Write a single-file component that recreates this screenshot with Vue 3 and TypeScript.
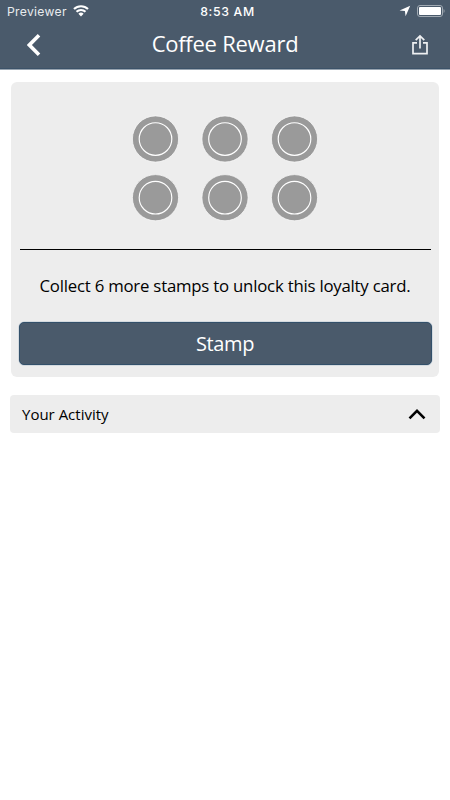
<script setup lang="ts">
import { computed, ref } from 'vue'

const total = 6
const columns = 3
const collected = ref(0)
const remaining = computed(() => total - collected.value)

const stamps = Array.from({ length: total }, (_, i) => ({
  id: i,
  cx: 23.5 + (i % columns) * 69.5,
  cy: 24 + Math.floor(i / columns) * 58.7,
}))
</script>

<template>
  <div class="screen">
    <header class="header">
      <div class="status">
        <div class="carrier">
          <span class="carrier-name">Previewer</span>
          <svg class="wifi" width="16" height="12" viewBox="0 0 16 12" fill="none" stroke="#fff" stroke-width="2.1">
            <path d="M1 4.1a10 10 0 0 1 14 0M3.5 6.8a6.4 6.4 0 0 1 9 0" />
            <path d="M8 11.4L5.4 8.8a3.7 3.7 0 0 1 5.2 0z" fill="#fff" stroke="none" />
          </svg>
        </div>
        <span class="clock">8:53 AM</span>
        <div class="indicators">
          <svg width="12" height="12" viewBox="0 0 12 12"><path d="M11.2.8L6.6 11.2 5.9 6.1.6 5.5z" fill="#fff" /></svg>
          <svg width="28" height="12" viewBox="0 0 28 12">
            <rect x=".5" y=".5" width="25" height="11" rx="2.5" fill="none" stroke="#a1aab3" />
            <rect x="2" y="2" width="22" height="8" rx="1" fill="#fff" />
            <path d="M26.6 4c1.3.5 1.3 3.5 0 4z" fill="#a1aab3" />
          </svg>
        </div>
      </div>
      <nav class="nav">
        <svg class="back" width="14" height="22" viewBox="0 0 14 22"><path d="M12 1.3L2.4 11l9.6 9.7" fill="none" stroke="#fff" stroke-width="3.6" /></svg>
        <h1>Coffee Reward</h1>
        <svg class="share" width="18" height="22" viewBox="0 0 18 22" fill="none" stroke="#eef0f2" stroke-width="1.7">
          <path d="M6 8.8H2v10.8h14V8.8h-4M9 14.5V2M4.7 6.2L9 1.9l4.3 4.3" />
        </svg>
      </nav>
    </header>

    <section class="card">
      <svg class="stamps" width="187" height="107" viewBox="0 0 187 107">
        <g v-for="s in stamps" :key="s.id">
          <circle :cx="s.cx" :cy="s.cy" r="23.1" fill="#9a9a9a" stroke="#f7f7f7" stroke-width=".8" />
          <circle :cx="s.cx" :cy="s.cy" r="16.3" fill="none" stroke="#fff" stroke-width="1.15" />
        </g>
      </svg>
      <div class="divider"></div>
      <p class="message"><span>Collect {{ remaining }} more stamps to unlock this loyalty card.</span></p>
      <button class="stamp-button" type="button">Stamp</button>
    </section>

    <section class="activity">
      <span>Your Activity</span>
      <svg width="18" height="12" viewBox="0 0 18 12"><path d="M1.5 10.3L9 2.8l7.5 7.5" fill="none" stroke="#000" stroke-width="2.6" /></svg>
    </section>
  </div>
</template>

<style>
body {
  margin: 0;
  background: #fff;
}
</style>

<style scoped>
.screen {
  width: 450px;
  height: 800px;
  background: #fff;
  font-family: "Open Sans", "Noto Sans", sans-serif;
  color: #000;
  overflow: hidden;
}
.header {
  box-sizing: border-box;
  height: 70px;
  background: #4a5a6b;
  border-bottom: 1px solid #98a4b0;
  box-shadow: inset 0 -1px #3c5268;
  color: #fff;
}
.status {
  display: grid;
  grid-template-columns: 1fr auto 1fr;
  align-items: center;
  height: 22px;
  padding: 0 5px 0 7px;
  font-family: Inter, sans-serif;
}
.carrier,
.indicators {
  display: flex;
  align-items: center;
}
.carrier {
  gap: 6px;
}
.carrier-name {
  font-size: 12.2px;
  letter-spacing: 0.3px;
  color: #e8ebee;
}
.clock {
  padding-left: 3px;
  font-size: 12.3px;
  font-weight: 500;
  letter-spacing: 0.65px;
}
.indicators {
  justify-content: flex-end;
  gap: 6px;
}
.nav {
  display: grid;
  grid-template-columns: 60px 1fr 60px;
  align-items: center;
  height: 46px;
}
.back {
  margin-left: 26.5px;
}
.share {
  margin-left: 21px;
}
h1 {
  margin: 0;
  padding-bottom: 3px;
  text-align: center;
  font-size: 22px;
  font-weight: 400;
  line-height: 43px;
  letter-spacing: -0.25px;
}
.card {
  box-sizing: border-box;
  height: 295px;
  margin: 12px 11px 0;
  padding: 33px 7.5px 0;
  background: #ededed;
  border-radius: 6px;
}
.stamps {
  display: block;
  margin: 0 auto;
}
.divider {
  height: 1px;
  margin: 27px 1px 0;
  background: #000;
}
.message {
  margin: 23px 0 0;
  text-align: center;
  font-size: 16.8px;
  line-height: 26px;
  letter-spacing: -0.22px;
  white-space: nowrap;
}
.stamp-button {
  display: block;
  box-sizing: border-box;
  width: 413px;
  height: 43px;
  margin: 23px 0 0;
  padding: 0;
  border: 1px solid #33506a;
  border-radius: 5px;
  background: #4a5a6b;
  box-shadow: 0 0 0 0.5px #bcc7d2;
  color: #fff;
  font: 400 20px "Open Sans", "Noto Sans", sans-serif;
  letter-spacing: -0.4px;
}
.activity {
  box-sizing: border-box;
  display: flex;
  align-items: center;
  justify-content: space-between;
  height: 38px;
  margin: 18px 10px 0;
  padding: 0 14px 0 12px;
  background: #ededed;
  border-radius: 4px;
  font-size: 15px;
}
</style>
